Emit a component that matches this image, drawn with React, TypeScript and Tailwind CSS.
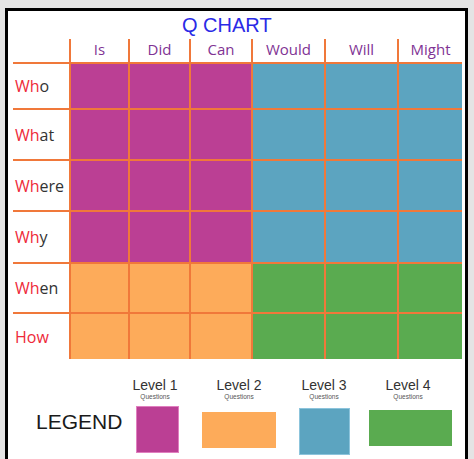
import React from "react";

const LINE = "border-[#f0783a]";

const cols = ["Is", "Did", "Can", "Would", "Will", "Might"];
const rows: { red: string; rest: string }[] = [
  { red: "Wh", rest: "o" },
  { red: "Wh", rest: "at" },
  { red: "Wh", rest: "ere" },
  { red: "Wh", rest: "y" },
  { red: "Wh", rest: "en" },
  { red: "How", rest: "" },
];

function cellColor(r: number, c: number) {
  if (r < 4) return c < 3 ? "bg-[#bb3f94]" : "bg-[#5ca4c0]";
  return c < 3 ? "bg-[#fdab5a]" : "bg-[#5aab50]";
}

export default function App() {
  const labelFont = { fontFamily: '"Open Sans", "DejaVu Sans", sans-serif' };
  const arial = { fontFamily: '"Liberation Sans", Arial, sans-serif' };
  return (
    <div className="w-[474px] h-[459px] bg-[#e4e4e4] pl-[5px] pt-[8px] pr-[6px] overflow-hidden">
      <div className="h-[451px] border-l-[3px] border-t-[3px] border-r-[3px] border-black bg-white">
        <div
          className="h-[28px] pl-[174px] text-[20px] leading-[28px] text-[#2a2ae6] whitespace-nowrap"
          style={arial}
        >
          Q CHART
        </div>
        <div
          className="ml-[5px] grid grid-cols-[56px_59px_61px_62px_73px_73px_65px] grid-rows-[23px_46px_51px_51px_52px_50px_47px]"
          style={labelFont}
        >
          <div />
          {cols.map((c) => (
            <div
              key={c}
              className={`border-l-2 ${LINE} flex items-center justify-center pb-[3px] text-[15px] font-medium text-[#7f3394]`}
            >
              {c}
            </div>
          ))}
          {rows.map((r, ri) => (
            <React.Fragment key={ri}>
              <div
                className={`border-t-2 ${LINE} flex items-center pl-[2px] text-[16px] font-medium`}
              >
                <span className="text-[#ee2a3a]">{r.red}</span>
                <span className="text-[#333333]">{r.rest}</span>
              </div>
              {cols.map((c, ci) => (
                <div
                  key={c}
                  className={`border-t-2 border-l-2 ${LINE} ${cellColor(ri, ci)}`}
                />
              ))}
            </React.Fragment>
          ))}
        </div>
        <div className="flex pl-[28px]" style={arial}>
          <div className="w-[77px] mt-[51px] text-[21px] leading-[24px] text-[#1a1a1a] whitespace-nowrap">
            LEGEND
          </div>
          <div className="w-[84px] mt-[18px] flex flex-col items-center">
            <div className="text-[14px] leading-[16px] text-[#333]">Level 1</div>
            <div className="text-[6.5px] leading-[8px] text-[#555]">Questions</div>
            <div className="mt-[5px] ml-[4px] w-[43px] h-[47px] bg-[#bb3f94] border border-[#e07fbf]" />
          </div>
          <div className="w-[84px] mt-[18px] flex flex-col items-center">
            <div className="text-[14px] leading-[16px] text-[#333]">Level 2</div>
            <div className="text-[6.5px] leading-[8px] text-[#555]">Questions</div>
            <div className="mt-[11px] w-[74px] h-[36px] bg-[#fdab5a]" />
          </div>
          <div className="w-[84px] ml-[1px] mt-[18px] flex flex-col items-center">
            <div className="text-[14px] leading-[16px] text-[#333]">Level 3</div>
            <div className="text-[6.5px] leading-[8px] text-[#555]">Questions</div>
            <div className="mt-[7px] w-[51px] h-[47px] bg-[#5ca4c0] border border-[#8cc4dc]" />
          </div>
          <div className="w-[84px] mt-[18px] flex flex-col items-center">
            <div className="text-[14px] leading-[16px] text-[#333]">Level 4</div>
            <div className="text-[6.5px] leading-[8px] text-[#555]">Questions</div>
            <div className="mt-[9px] ml-[5px] w-[83px] h-[36px] bg-[#5aab50]" />
          </div>
        </div>
      </div>
    </div>
  );
}
